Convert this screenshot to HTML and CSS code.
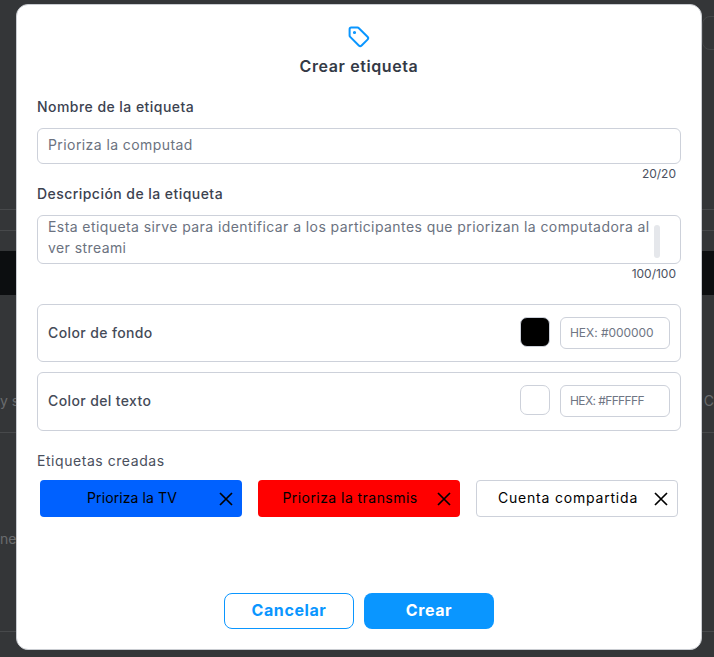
FILE: index.html
```html
<!DOCTYPE html>
<html lang="es">
<head>
<meta charset="utf-8">
<title>Crear etiqueta</title>
<link rel="stylesheet" href="styles.css">
</head>
<body>
<div class="backdrop">
  <div class="bg-top"><span class="bg-pill"></span></div>
  <div class="bg-row r1"></div>
  <div class="bg-row r2"></div>
  <div class="bg-band"></div>
  <div class="bg-text r3"><span>y s</span><span>o C</span></div>
  <div class="bg-text r4"><span>ne</span></div>
  <div class="bg-row r5"></div>
</div>
<main class="modal">
  <header class="head">
    <svg class="tag" viewBox="0 0 24 24" width="24" height="24" fill="none" stroke="#0a96ff" stroke-width="2" stroke-linejoin="round" stroke-linecap="round">
      <path d="M4.2 2.6h6.3c.5 0 1 .2 1.4.6l8.6 8.6c.8.8.8 2 0 2.8l-5.9 5.9c-.8.8-2 .8-2.8 0L3.2 11.9c-.4-.4-.6-.9-.6-1.4V4.2c0-.9.7-1.6 1.6-1.6z"/>
      <circle cx="7.5" cy="7.5" r=".6" fill="#0a96ff"/>
    </svg>
    <h1 class="title">Crear etiqueta</h1>
  </header>
  <label class="label first">Nombre de la etiqueta</label>
  <div class="field single">Prioriza la computad</div>
  <div class="count">20/20</div>
  <label class="label">Descripción de la etiqueta</label>
  <div class="field multi">Esta etiqueta sirve para identificar a los participantes que priorizan la computadora al ver streami<span class="thumb"></span></div>
  <div class="count">100/100</div>
  <section class="color-row bg">
    <span class="color-name">Color de fondo</span>
    <span class="swatch black"></span>
    <span class="hex">HEX: #000000</span>
  </section>
  <section class="color-row fg">
    <span class="color-name">Color del texto</span>
    <span class="swatch white"></span>
    <span class="hex tight">HEX: #FFFFFF</span>
  </section>
  <div class="created">Etiquetas creadas</div>
  <div class="chips">
    <div class="chip blue"><span class="chip-text">Prioriza la TV</span>
      <svg class="x" viewBox="0 0 14 14" width="14" height="14"><path d="M1 1l12 12M13 1L1 13"/></svg></div>
    <div class="chip red"><span class="chip-text">Prioriza la transmis</span>
      <svg class="x" viewBox="0 0 14 14" width="14" height="14"><path d="M1 1l12 12M13 1L1 13"/></svg></div>
    <div class="chip plain"><span class="chip-text">Cuenta compartida</span>
      <svg class="x" viewBox="0 0 14 14" width="14" height="14"><path d="M1 1l12 12M13 1L1 13"/></svg></div>
  </div>
  <footer class="actions">
    <button class="btn ghost">Cancelar</button>
    <button class="btn solid">Crear</button>
  </footer>
</main>
</body>
</html>
```
FILE: styles.css
```css
* { box-sizing: border-box; }
html, body { margin: 0; height: 657px; overflow: hidden; }
body { background: #343638; font-family: "Inter", "Open Sans", sans-serif; position: relative; }

.backdrop { height: 657px; color: #6a6c6e; font-size: 14px; }
.bg-top { height: 209px; padding-top: 16px; display: flex; justify-content: flex-end; }
.bg-pill { width: 30px; height: 34px; margin-right: -18px; border: 1px solid #444648; border-radius: 8px; }
.bg-row { border-top: 1px solid #47494b; }
.r1 { height: 21px; }
.r2 { height: 21px; }
.bg-band { height: 44px; background: #0c0e10; }
.bg-text { display: flex; justify-content: space-between; align-items: center; }
.r3 { height: 138px; border-bottom: 1px solid #47494b; padding-top: 74px; }
.r4 { height: 198px; padding-top: 12px; }
.r5 { height: 26px; }

.modal {
  position: absolute; left: 16px; top: 4px; width: 686px; height: 646px;
  background: #fff; border-radius: 12px; border: 1px solid #c9ccd1;
  padding: 0 20px;
  color: #374151;
}
.head { display: flex; flex-direction: column; align-items: center; padding-top: 20px; }
.tag { display: block; }
.title { margin: 7px 0 0; font-size: 16px; line-height: 20px; font-weight: 600; letter-spacing: .6px; color: #343a46; }

.label { display: block; font-size: 14px; line-height: 20px; font-weight: 450; letter-spacing: .45px; color: #3c4250; }
.first { margin-top: 21px; }

.field { position: relative; border: 1px solid #cdd1da; border-radius: 6px; margin-top: 11px; padding: 0 10px; font-size: 14px; color: #6b7280; letter-spacing: .42px; }
.single { height: 36px; line-height: 32px; }
.multi { height: 49px; line-height: 21px; padding-right: 25px; }
.thumb { position: absolute; right: 20px; top: 9px; width: 6px; height: 33px; border-radius: 3px; background: #e5e7eb; }
.count { text-align: right; font-size: 12px; line-height: 20px; padding-right: 5px; color: #4b5160; }

.color-row { display: flex; align-items: center; border: 1px solid #cdd1da; border-radius: 6px; padding: 0 10px; }
.bg { height: 58px; margin-top: 20px; }
.fg { height: 59px; margin-top: 10px; }
.color-name { flex: 1; padding-bottom: 2px; font-size: 14px; font-weight: 450; letter-spacing: .38px; color: #454b58; }
.swatch { width: 30px; height: 30px; border-radius: 7px; margin-right: 10px; margin-top: -3px; }
.black { background: #000; border: 1px solid #cdd1da; }
.white { background: #fff; border: 1px solid #cdd1da; }
.hex { width: 110px; height: 32px; border: 1px solid #cdd1da; border-radius: 6px; padding-left: 9px; line-height: 29px; font-size: 12px; color: #6f7684; letter-spacing: -.05px; margin-top: -1px; }
.tight { letter-spacing: -.6px; }

.created { margin-top: 20px; font-size: 14px; line-height: 20px; letter-spacing: .55px; color: #4a505d; }
.chips { display: flex; gap: 16px; margin-top: 9px; padding-left: 3px; }
.chip { width: 202px; height: 37px; border-radius: 4px; display: flex; align-items: center; color: #000; font-size: 14px; letter-spacing: .45px; padding-right: 9px; }
.chip-text { flex: 1; text-align: center; padding: 0 0 2px 5px; white-space: nowrap; }
.blue { background: #0061ff; letter-spacing: .1px; }
.red { background: #ff0000; }
.plain { background: #fff; border: 1px solid #cdd1da; letter-spacing: .8px; }
.x { stroke: #000; stroke-width: 1.7; fill: none; flex: none; }

.actions { display: flex; justify-content: center; gap: 10px; margin-top: 76px; }
.btn { width: 130px; height: 36px; padding-bottom: 3px; border-radius: 8px; font: 700 16px "Inter", sans-serif; letter-spacing: .6px; }
.ghost { background: #fff; color: #0a96ff; border: 1px solid #0a96ff; }
.solid { background: #0a96ff; color: #fff; border: 0; }
```
